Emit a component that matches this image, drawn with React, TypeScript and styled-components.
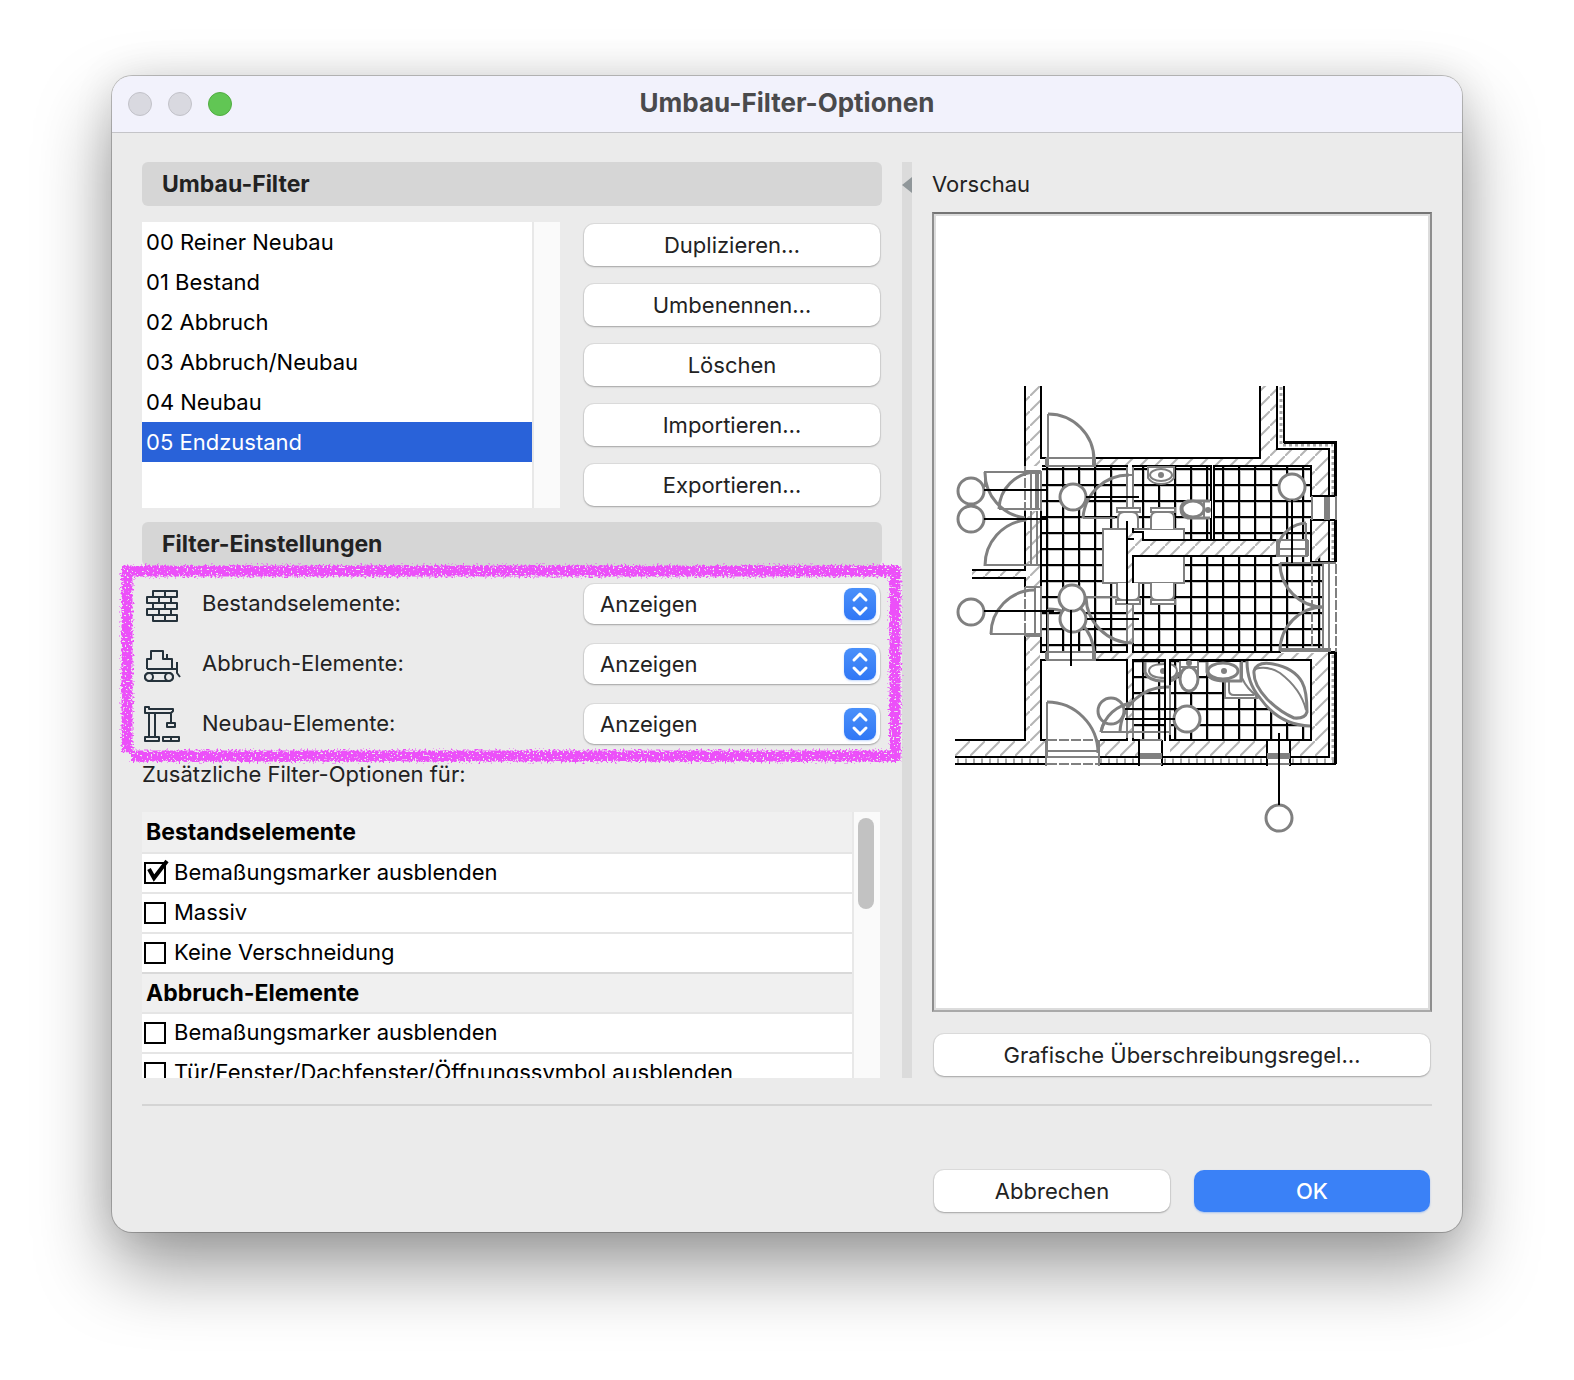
import React, { useState } from "react";
import styled, { createGlobalStyle, css } from "styled-components";

const GlobalStyle = createGlobalStyle`
  *, *::before, *::after { box-sizing: border-box; }
  body {
    margin: 0;
    background: #fff;
    color: #222;
    font-family: Inter, "Liberation Sans", sans-serif;
    font-size: 22px;
    line-height: 28px;
  }
  button, select, input { font: inherit; color: inherit; margin: 0; }
`;

const Page = styled.main`
  padding: 76px 112px 148px;
`;

const Dialog = styled.section`
  border-radius: 20px;
  background: #ebebeb;
  box-shadow:
    0 0 0 1px rgba(0, 0, 0, 0.22),
    0 36px 76px rgba(0, 0, 0, 0.4),
    0 0 40px rgba(0, 0, 0, 0.1);
`;

const TitleBar = styled.header`
  display: grid;
  grid-template-columns: 1fr auto 1fr;
  align-items: center;
  height: 57px;
  padding: 0 16px;
  border-bottom: 1px solid #c4c4c8;
  border-radius: 20px 20px 0 0;
  background: #f2f2fc;
`;

const Lights = styled.div`
  display: flex;
  gap: 16px;
`;

const Light = styled.button<{ $active?: boolean }>`
  width: 24px;
  height: 24px;
  padding: 0;
  border: 1px solid ${(p) => (p.$active ? "#51ad41" : "#c2c2c9")};
  border-radius: 50%;
  background: ${(p) => (p.$active ? "#61c654" : "#d9d9e0")};
`;

const Title = styled.h1`
  margin: 0;
  padding-bottom: 2px;
  color: #4a4a4c;
  font-size: 26px;
  font-weight: 700;
  line-height: 32px;
`;

const Body = styled.div`
  display: grid;
  grid-template-columns: minmax(0, 74fr) 10px minmax(0, 50fr);
  gap: 20px;
  padding: 29px 30px 26px;
`;

const Column = styled.div`
  display: flex;
  flex-direction: column;
`;

const SectionTitle = styled.h2`
  margin: 0;
  padding: 0 20px;
  border-radius: 6px;
  background: #d6d6d6;
  font-size: 23px;
  font-weight: 700;
  line-height: 44px;
`;

const FilterArea = styled.div`
  display: grid;
  grid-template-columns: minmax(0, 1fr) 296px;
  gap: 24px;
  padding: 16px 2px 14px 0;
`;

const ListFrame = styled.div`
  display: grid;
  grid-template-columns: minmax(0, 1fr) 28px;
  overflow: hidden;
  background: #fff;
`;

const ScrollTrack = styled.div`
  padding: 6px 4px;
  border-left: 2px solid #e8e8e8;
  background: #fafafa;
`;

const ScrollThumb = styled.div`
  width: 16px;
  height: 91px;
  border-radius: 8px;
  background: #c2c2c2;
`;

const FilterList = styled.ul`
  margin: 0;
  padding: 0;
  list-style: none;
`;

const FilterItem = styled.button<{ $selected: boolean }>`
  display: block;
  width: 100%;
  height: 40px;
  padding: 0 4px;
  border: 0;
  background: ${(p) => (p.$selected ? "#2962d9" : "transparent")};
  color: ${(p) => (p.$selected ? "#fff" : "#000")};
  text-align: left;
`;

const ButtonStack = styled.div`
  display: flex;
  flex-direction: column;
  gap: 18px;
  padding: 2px 0;
`;

const raised = css`
  border: 0;
  border-radius: 10px;
  background: #fff;
  box-shadow:
    0 0 0 1px rgba(0, 0, 0, 0.06),
    0 1px 2px rgba(0, 0, 0, 0.26);
`;

const PushButton = styled.button<{ $primary?: boolean }>`
  ${raised}
  height: 42px;
  padding: 0 16px;
  ${(p) =>
    p.$primary &&
    css`
      background: #3a81f7;
      box-shadow: 0 1px 2px rgba(58, 129, 247, 0.4);
      color: #fff;
      font-weight: 500;
    `}
`;

const Settings = styled.div`
  position: relative;
  display: grid;
  gap: 20px;
  padding: 18px 2px 0;
`;

const SettingRow = styled.div`
  display: grid;
  grid-template-columns: 36px minmax(0, 1fr) 296px;
  align-items: center;
  column-gap: 22px;
`;

const SettingLabel = styled.label`
  padding-bottom: 2px;
`;

const SelectBox = styled.div`
  ${raised}
  position: relative;
  height: 40px;
`;

const Select = styled.select`
  width: 100%;
  height: 40px;
  padding: 0 44px 0 16px;
  border: 0;
  border-radius: 10px;
  background: transparent;
  appearance: none;
`;

const Stepper = styled.svg`
  position: absolute;
  top: 4px;
  right: 4px;
  border-radius: 8px;
  background: linear-gradient(#4a90fa, #3077f5);
  box-shadow: 0 1px 2px rgba(48, 119, 245, 0.3);
  pointer-events: none;
`;

const Highlight = styled.svg`
  position: absolute;
  top: 5px;
  left: -15px;
  width: calc(100% + 28px);
  height: calc(100% + 7px);
  overflow: visible;
  pointer-events: none;
`;

const Note = styled.p`
  margin: 16px 0 24px;
`;

const OptionFrame = styled(ListFrame)`
  height: 266px;
  margin-right: 2px;
`;

const OptionGroup = styled.fieldset`
  min-width: 0;
  margin: 0;
  padding: 0;
  border: 0;
`;

const GroupTitle = styled.legend<{ $first: boolean }>`
  width: 100%;
  height: ${(p) => (p.$first ? "42px" : "40px")};
  padding: 0 4px;
  border-bottom: 2px solid #e5e5e5;
  background: #f0f0f0;
  color: #000;
  font-size: 23px;
  font-weight: 700;
  line-height: ${(p) => (p.$first ? "40px" : "38px")};
`;

const Options = styled.div`
  overflow-y: auto;
  scrollbar-width: none;
`;

const OptionRow = styled.label<{ $last: boolean }>`
  position: relative;
  display: flex;
  align-items: center;
  gap: 8px;
  height: 40px;
  padding: 0 2px;
  border-bottom: 2px solid ${(p) => (p.$last ? "#d9d9d9" : "#e5e5e5")};
  color: #000;
  white-space: nowrap;
`;

const OptionText = styled.span`
  padding-bottom: 2px;
`;

const Tick = styled.svg`
  position: absolute;
  top: 4px;
  left: 2px;
  visibility: hidden;
  pointer-events: none;
`;

const CheckBox = styled.input`
  flex: none;
  width: 22px;
  height: 22px;
  border: 2px solid #000;
  background: #fff;
  appearance: none;
  &:checked + ${Tick} { visibility: visible; }
`;

const Splitter = styled.div`
  padding-top: 15px;
  background: #dbdbdb;
`;

const CollapseButton = styled.button`
  display: block;
  width: 10px;
  height: 16px;
  padding: 0;
  border: 0;
  background: #90979a;
  clip-path: polygon(100% 0, 0 50%, 100% 100%);
`;

const PreviewTitle = styled.h2`
  margin: 0 0 6px;
  font-size: 22px;
  font-weight: 400;
  line-height: 44px;
`;

const Preview = styled.div`
  display: flex;
  margin-bottom: 22px;
  border: 2px solid;
  border-color: #757575 #8e8e8e #a9a9a9;
  background: #fff;
  box-shadow: inset 0 0 0 2px #dcdcdc;
  svg { display: block; width: 100%; height: auto; }
`;

const PreviewAction = styled.div`
  display: grid;
  padding: 0 2px;
`;

const Footer = styled.footer`
  display: grid;
  grid-template-columns: 236px 236px;
  justify-content: end;
  gap: 24px;
  margin: 0 30px;
  padding: 64px 2px 20px;
  border-top: 2px solid #d4d4d4;
`;

const Icon = ({ children }: { children: React.ReactNode }) => (
  <svg width="36" height="36" viewBox="0 0 36 36" fill="none" stroke="#25323b" strokeWidth="2" strokeLinejoin="round" overflow="visible" aria-hidden="true">
    {children}
  </svg>
);

const BrickIcon = () => (
  <Icon>
    <path d="M9 5H33V11H9ZM3 11H27V17H3ZM9 17H33V23H9ZM3 23H27V29H3ZM9 29H33V35H9ZM21 5V11M15 11V17M27 11V17M21 17V23M15 23V29M27 23V29M21 29V35" />
  </Icon>
);

const DozerIcon = () => (
  <Icon>
    <path d="M3 23V13H7V5H19V13H28V23M3 23H33M23 8V13M33 16V27L36 31" />
    <rect x="1" y="27" width="28" height="8" rx="4" />
    <circle cx="5" cy="31" r="4" />
    <circle cx="25" cy="31" r="4" />
  </Icon>
);

const CraneIcon = () => (
  <Icon>
    <path d="M1 7V1H5V3H29V5L27 7ZM5 7V31M11 7V31M27 7V16M23 17H31V21H23ZM1 31H15V35H1ZM19 31H35V35H19ZM27 31V35" />
  </Icon>
);

const HighlightFrame = () => (
  <Highlight aria-hidden="true">
    <defs>
      <filter id="crayon" filterUnits="userSpaceOnUse" x="-20" y="-20" width="2000" height="400" colorInterpolationFilters="sRGB">
        <feTurbulence type="fractalNoise" baseFrequency="0.5" numOctaves="2" seed="7" result="noise" />
        <feDisplacementMap in="SourceGraphic" in2="noise" scale="9" xChannelSelector="R" yChannelSelector="G" result="rough" />
        <feColorMatrix in="noise" type="matrix" values="0 0 0 0 0  0 0 0 0 0  0 0 0 0 0  0 0 -14 0 10" result="grain" />
        <feComposite in="rough" in2="grain" operator="in" />
      </filter>
    </defs>
    <g stroke="#ec50f9" strokeWidth="11" filter="url(#crayon)">
      <line x1="-5" y1="0" x2="100%" y2="0" />
      <line x1="0" y1="0" x2="0" y2="98%" />
      <line x1="4" y1="100%" x2="100%" y2="100%" />
      <line x1="100%" y1="-5" x2="100%" y2="103%" />
    </g>
  </Highlight>
);

const circles = [
  [971, 491], [971, 519], [1073, 497], [971, 612], [1073, 619], [1072, 598],
  [1111, 711], [1187, 719], [1292, 487], [1279, 818],
];

const FloorPlan = () => (
  <svg viewBox="934 214 496 796" fill="none" role="img" aria-label="Grundriss">
    <defs>
      <pattern id="tiles" patternUnits="userSpaceOnUse" x="1046" y="468" width="16" height="16">
        <path d="M2 2H16M2 2V16" stroke="#c4c4c4" strokeWidth="2" />
        <path d="M0 1H16M1 0V16" stroke="#000" strokeWidth="2" />
      </pattern>
      <pattern id="hatch" patternUnits="userSpaceOnUse" x="955" y="741" width="15" height="15">
        <path d="M-1 16L16 -1" stroke="#b4b4b4" strokeWidth="2" />
      </pattern>
    </defs>

    <g fill="url(#tiles)" shapeRendering="crispEdges">
      <path d="M1042 467H1126V651H1042ZM1134 467H1210V539H1134ZM1214 467H1311V539H1214ZM1134 557H1323V651H1134ZM1134 661H1164V739H1134ZM1171 661H1311V739H1171Z" />
    </g>

    <path d="M1103 529H1184V583H1103Z" fill="#fff" stroke="#808080" strokeWidth="2" />

    <path d="M1128 521H1133V532H1143V540H1276V556H1133V652H1128Z" fill="#fff" />
    <g fill="url(#hatch)">
      <path d="M1026 386H1040V466H1026ZM1026 511H1040V586H1026ZM1026 636H1040V741H1026Z" />
      <path d="M1095 459H1260V386H1277V449H1329V496H1312V466H1095ZM1312 520H1329V562H1312Z" />
      <path d="M1128 521H1133V532H1143V540H1276V556H1133V652H1128Z" />
      <path d="M1095 653H1329V757H1290V741H1312V660H1095ZM1170 741H1267V757H1170ZM955 741H1045V757H955ZM1100 741H1139V757H1100ZM972 571H1025V577H972ZM1128 660H1132V740H1128Z" />
    </g>
    <g stroke="#a8a8a8" strokeWidth="5" strokeDasharray="2 6">
      <path d="M957 761H1045M1100 761H1138M1164 761H1266M1292 761H1334" />
      <path d="M1333 655V760M1333 450V495M1333 522V560M1281 387V445H1333" strokeWidth="3" strokeDasharray="3 3" />
    </g>

    <g stroke="#000" strokeWidth="2" strokeLinecap="square" shapeRendering="crispEdges">
      <path d="M1025 387V465M1025 512V570H973M973 578H1025V586M1025 637V740H956" />
      <path d="M1041 387V458H1045M1041 512V585M1041 637V652H1046M1041 660V740H1045M1042 660H1046" />
      <path d="M1096 458H1260V387M1277 387V449H1329V495M1284 387V442M1329 521V561" />
      <path d="M1043 466H1127M1133 466H1211V539M1214 539V466H1311V495M1311 521V562H1335" />
      <path d="M1133 539H1127M1127 521H1133V532H1143V540H1276M1127 521V652H1096M1275 556H1133V652H1280" />
      <path d="M1096 660H1127V740H1101M1133 740V660H1165V740M1170 740V660H1311V740H1170M1133 740H1139" />
      <path d="M956 757H1045M956 764H1045M1101 757H1139M1101 764H1139M1163 764H1335M1163 757H1266M1291 757H1329V653" />
      <path d="M1139 741V765M1162 741V765M1267 741V765M1290 741V765M1311 496H1336M1311 520H1336" />
    </g>
    <path d="M1284 442H1335V496M1335 520V562M1329 652H1335V764" stroke="#000" strokeWidth="3" shapeRendering="crispEdges" />

    <g fill="#fff" shapeRendering="crispEdges">
      <path d="M1047 459H1095V465H1047ZM1048 653H1095V659H1048ZM1204 501H1211V518H1204ZM1179 661H1198V668H1179Z" />
      <path d="M1166 661H1169V739H1166ZM1128 467H1132V519H1128Z" />
    </g>

    <g stroke="#808080" strokeWidth="2" shapeRendering="crispEdges">
      <path d="M1048 466V414M1047 458H1095V466H1047ZM1048 660V609M1047 652H1095V660H1047Z" />
      <path d="M985 487V472H1041V509H999M1031 472V509M1041 472V511M985 565H1040M1031 511V566M1037 511V566" />
      <path d="M991 635V634H1041M1025 587H1041V636H1025M1035 587V636" />
      <path d="M1083 518H1115M1127 475H1133M1127 467V520M1133 467V520M1086 597H1127M1127 584V643M1133 584V643" />
      <path d="M1047 756V702M1046 740V766M1099 740V766M1047 751H1098M1047 757H1098M1101 732H1170M1127 703V738M1133 703V738M1165 685V735M1170 685V735" />
      <path d="M1306 523V555M1277 540H1307V556H1277ZM1277 549H1307M1323 563V652M1329 563V652M1312 496V520M1336 496V520" />
      <path d="M1280 563H1336M1140 740H1162M1140 764H1162M1268 764H1290" />
      <path d="M1047 740H1098M1047 764H1098M1336 564V652M1312 564V652M1025 466V511M1025 587V636" strokeDasharray="10 2" />
    </g>
    <g stroke="#808080" strokeWidth="4" shapeRendering="crispEdges">
      <path d="M1037 472V509M1047 458V466M1094 458V466M1047 652V660M1094 652V660M1280 650H1331M1278 540V556M1307 540V556M1025 472H1041" />
      <path d="M1140 756H1162M1267 756H1290M1327 497V520" strokeWidth="6" />
    </g>
    <g stroke="#808080" strokeWidth="3">
      <path d="M1048 414A46 46 0 0 1 1094 460M1048 609A46 46 0 0 1 1094 655M1047 702A51 51 0 0 1 1098 753" />
      <path d="M985 472A46 46 0 0 0 1025 518M999 509A38 38 0 0 1 1036 472M985 566A46 46 0 0 1 1026 520M991 634A44 44 0 0 1 1034 590" />
      <path d="M1083 518A46 46 0 0 1 1129 475M1086 597A47 47 0 0 0 1133 643M1101 732A36 36 0 0 1 1133 703M1120 732A47 47 0 0 1 1170 687" />
      <path d="M1278 545A31 31 0 0 1 1306 523M1280 563A44 44 0 0 0 1324 607A44 44 0 0 0 1280 651" />
    </g>

    <g stroke="#808080" strokeWidth="2" fill="#fff">
      <path d="M1118 528V519Q1118 512 1124 512H1132Q1138 512 1138 519V528M1117 508H1140V512H1117Z" />
      <path d="M1151 529V518Q1151 512 1157 512H1168Q1174 512 1174 518V529M1151 508H1175V512H1151Z" />
      <path d="M1117 583V595Q1117 600 1123 600H1133Q1139 600 1139 595V583M1116 600H1140V604H1116Z" />
      <path d="M1151 583V595Q1151 600 1157 600H1168Q1174 600 1174 595V583M1151 600H1175V604H1151Z" />
    </g>
    <path d="M1127 521V604" stroke="#000" strokeWidth="2" shapeRendering="crispEdges" />
    <g stroke="#808080" strokeWidth="3" fill="#fff">
      <path d="M1148 467H1174V478Q1170 484 1161 484Q1152 484 1148 478Z" strokeWidth="2" />
      <ellipse cx="1161" cy="475" rx="11" ry="6" strokeWidth="2" />
      <path d="M1210 501H1188Q1181 503 1181 509Q1181 516 1188 518H1210" />
      <ellipse cx="1193" cy="509" rx="11" ry="8" />
      <path d="M1204 501V518" strokeWidth="2" />
      <path d="M1145 662V672Q1148 681 1163 681H1165M1170 681Q1178 679 1179 672" />
      <path d="M1165 664Q1149 664 1149 671Q1150 678 1165 678M1170 664Q1177 666 1177 671Q1176 677 1170 678" strokeWidth="2" />
      <path d="M1180 661V674M1198 661V674M1180 667H1198" strokeWidth="2" />
      <ellipse cx="1189" cy="679" rx="9" ry="12" />
      <path d="M1225 680V698H1257L1248 680Z" strokeWidth="2" />
      <path d="M1229 680V690Q1229 695 1234 695H1254" strokeWidth="2" />
      <path d="M1207 662V672Q1209 681 1224 681H1241V662" />
      <ellipse cx="1223" cy="671" rx="15" ry="8" />
      <path d="M1247 661Q1247 683 1260 698Q1279 725 1310 726V661Z" stroke="none" />
      <path d="M1242 661V678Q1247 689 1257 696" strokeWidth="2" />
      <path d="M1247 661Q1247 683 1260 698Q1279 725 1310 726" />
      <path d="M1254 671Q1257 661 1273 664Q1294 668 1302 682Q1307 691 1307 712Q1305 719 1294 718Q1280 712 1267 699Q1253 684 1254 671Z" />
      <path d="M1255 669Q1267 665 1280 673Q1301 689 1306 710" fill="none" strokeWidth="2" />
    </g>
    <g fill="#808080">
      <circle cx="1161" cy="475" r="3" />
      <circle cx="1208" cy="510" r="3" />
      <circle cx="1163" cy="671" r="3" />
      <circle cx="1224" cy="671" r="3" />
      <circle cx="1189" cy="663" r="3" />
    </g>
    <path d="M1165 661V740M1170 661V684" stroke="#000" strokeWidth="2" shapeRendering="crispEdges" />

    <g fill="#fff" stroke="#808080" strokeWidth="3">
      {circles.map(([x, y]) => (
        <circle key={`${x}-${y}`} cx={x} cy={y} r="13" />
      ))}
    </g>
    <path d="M1101 732A36 36 0 0 1 1133 703" stroke="#808080" strokeWidth="3" />
    <path
      d="M984 490H1047M984 519H1047M984 611H1054M1086 497H1139M1087 619H1139M1071 610V666M1125 709H1175M1125 719H1175M1279 733V805M1292 500V563"
      stroke="#000"
      strokeWidth="2"
      shapeRendering="crispEdges"
    />
  </svg>
);

const filters = ["00 Reiner Neubau", "01 Bestand", "02 Abbruch", "03 Abbruch/Neubau", "04 Neubau", "05 Endzustand"];
const actions = ["Duplizieren…", "Umbenennen…", "Löschen", "Importieren…", "Exportieren…"];
const settings = [
  { id: "bestand", label: "Bestandselemente:", icon: <BrickIcon /> },
  { id: "abbruch", label: "Abbruch-Elemente:", icon: <DozerIcon /> },
  { id: "neubau", label: "Neubau-Elemente:", icon: <CraneIcon /> },
];
const groups = [
  {
    title: "Bestandselemente",
    options: [
      { label: "Bemaßungsmarker ausblenden", checked: true },
      { label: "Massiv", checked: false },
      { label: "Keine Verschneidung", checked: false },
    ],
  },
  {
    title: "Abbruch-Elemente",
    options: [
      { label: "Bemaßungsmarker ausblenden", checked: false },
      { label: "Tür/Fenster/Dachfenster/Öffnungssymbol ausblenden", checked: false },
    ],
  },
];

export default function App() {
  const [selected, setSelected] = useState(5);

  return (
    <Page>
      <GlobalStyle />
      <Dialog role="dialog" aria-labelledby="dialog-title">
        <TitleBar>
          <Lights>
            <Light aria-label="Schließen" />
            <Light aria-label="Minimieren" />
            <Light $active aria-label="Vergrößern" />
          </Lights>
          <Title id="dialog-title">Umbau-Filter-Optionen</Title>
        </TitleBar>

        <Body>
          <Column>
            <SectionTitle>Umbau-Filter</SectionTitle>
            <FilterArea>
              <ListFrame>
                <FilterList>
                  {filters.map((name, i) => (
                    <li key={name}>
                      <FilterItem $selected={i === selected} onClick={() => setSelected(i)}>
                        {name}
                      </FilterItem>
                    </li>
                  ))}
                </FilterList>
                <ScrollTrack />
              </ListFrame>
              <ButtonStack>
                {actions.map((name) => (
                  <PushButton key={name}>{name}</PushButton>
                ))}
              </ButtonStack>
            </FilterArea>

            <SectionTitle>Filter-Einstellungen</SectionTitle>
            <Settings>
              {settings.map(({ id, label, icon }) => (
                <SettingRow key={id}>
                  {icon}
                  <SettingLabel htmlFor={id}>{label}</SettingLabel>
                  <SelectBox>
                    <Select id={id} defaultValue="Anzeigen">
                      <option>Anzeigen</option>
                      <option>Ausblenden</option>
                    </Select>
                    <Stepper width="32" height="32" viewBox="0 0 32 32" fill="none" stroke="#fff" strokeWidth="3" strokeLinecap="round" strokeLinejoin="round">
                      <path d="M10 12L16 6L22 12M10 20L16 26L22 20" />
                    </Stepper>
                  </SelectBox>
                </SettingRow>
              ))}
              <HighlightFrame />
            </Settings>

            <Note>Zusätzliche Filter-Optionen für:</Note>
            <OptionFrame>
              <Options>
                {groups.map((group, g) => (
                  <OptionGroup key={group.title}>
                    <GroupTitle $first={g === 0}>{group.title}</GroupTitle>
                    {group.options.map((option, i) => (
                      <OptionRow key={option.label} $last={i === group.options.length - 1}>
                        <CheckBox type="checkbox" defaultChecked={option.checked} />
                        <Tick width="28" height="28" viewBox="0 -4 28 28" fill="none" stroke="#000" strokeWidth="4">
                          <path d="M5 7L10 16L23 -1" />
                        </Tick>
                        <OptionText>{option.label}</OptionText>
                      </OptionRow>
                    ))}
                  </OptionGroup>
                ))}
              </Options>
              <ScrollTrack>
                <ScrollThumb />
              </ScrollTrack>
            </OptionFrame>
          </Column>

          <Splitter>
            <CollapseButton aria-label="Vorschau einklappen" />
          </Splitter>

          <Column>
            <PreviewTitle>Vorschau</PreviewTitle>
            <Preview>
              <FloorPlan />
            </Preview>
            <PreviewAction>
              <PushButton>Grafische Überschreibungsregel…</PushButton>
            </PreviewAction>
          </Column>
        </Body>

        <Footer>
          <PushButton>Abbrechen</PushButton>
          <PushButton $primary>OK</PushButton>
        </Footer>
      </Dialog>
    </Page>
  );
}
